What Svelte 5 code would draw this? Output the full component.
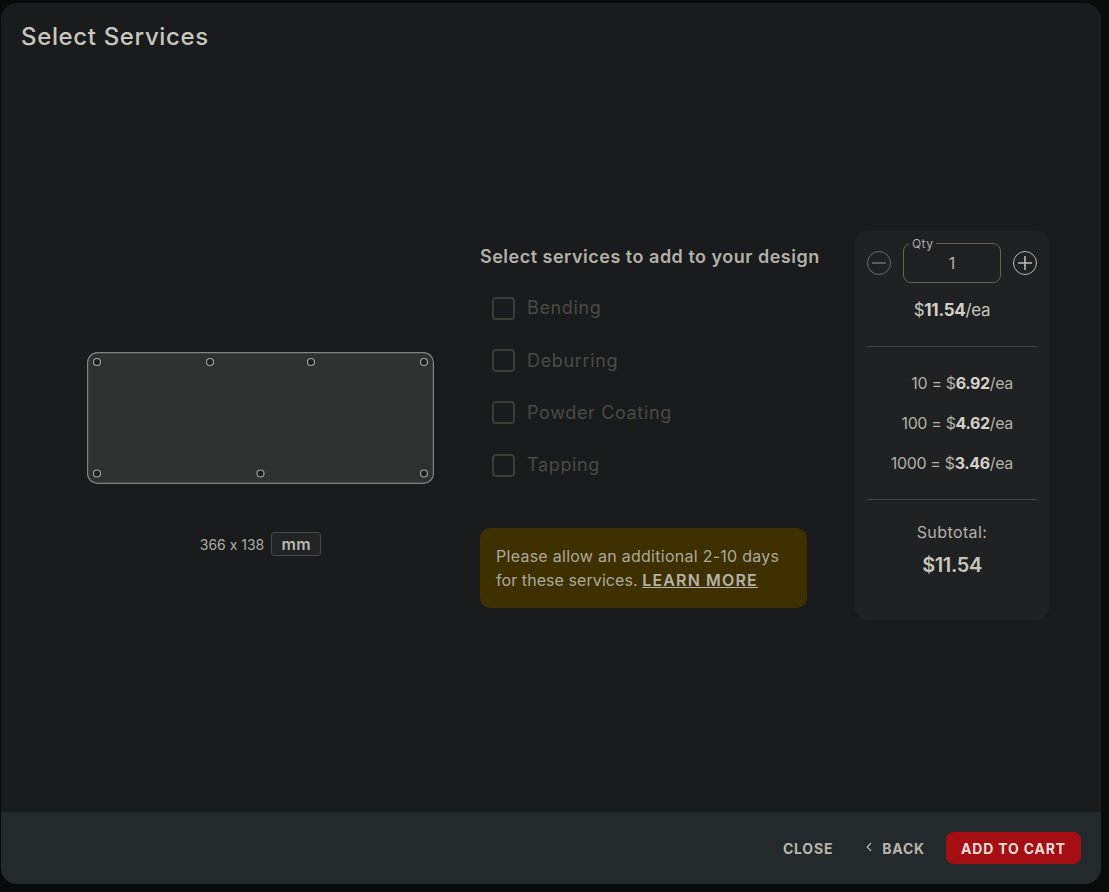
<script>
  const holes = [
    [10, 10], [123, 10], [224, 10], [337, 10],
    [10, 121.5], [173.5, 121.5], [337, 121.5]
  ];
  const services = ['Bending', 'Deburring', 'Powder Coating', 'Tapping'];
  const tiers = [
    { qty: 10, price: '6.92' },
    { qty: 100, price: '4.62' },
    { qty: 1000, price: '3.46' }
  ];
</script>

<div class="modal">
  <h1 class="title">Select Services</h1>

  <div class="content">
    <div class="preview">
      <svg class="plate" width="347" height="132" viewBox="0 0 347 132">
        <rect x="0.6" y="0.6" width="345.8" height="130.8" rx="10" fill="#303231" stroke="#838481" stroke-width="1.2" />
        {#each holes as [cx, cy]}
          <circle {cx} {cy} r="3.5" fill="#1d1f1f" stroke="#a8a8a5" stroke-width="1.1" />
        {/each}
      </svg>
      <div class="dims">
        <span>366 x 138</span>
        <span class="unit">mm</span>
      </div>
    </div>

    <div class="services">
      <h2 class="heading">Select services to add to your design</h2>
      <div class="options">
        {#each services as name}
          <label class="option">
            <input type="checkbox" disabled />
            <span>{name}</span>
          </label>
        {/each}
      </div>
      <div class="notice">
        <div class="line">Please allow an additional 2-10 days</div>
        <div class="line tight">for these services. <a href="#learn">LEARN MORE</a></div>
      </div>
    </div>

    <div class="pricing">
      <div class="qty-row">
        <button class="round minus" aria-label="Decrease">
          <svg width="24" height="24" viewBox="0 0 24 24"><circle cx="12" cy="12" r="11.5" fill="none" stroke="currentColor" /><path d="M5 12h14" stroke="currentColor" stroke-width="1.6" /></svg>
        </button>
        <div class="qty">
          <span class="qty-label">Qty</span>
          <span class="qty-value">1</span>
        </div>
        <button class="round plus" aria-label="Increase">
          <svg width="24" height="24" viewBox="0 0 24 24"><circle cx="12" cy="12" r="11.5" fill="none" stroke="currentColor" /><path d="M5 12h14M12 5v14" stroke="currentColor" stroke-width="1.6" /></svg>
        </button>
      </div>
      <div class="unit-price">$<b>11.54</b>/ea</div>
      <hr />
      <div class="tiers">
        {#each tiers as t}
          <div class="tier">{t.qty} = $<b>{t.price}</b>/ea</div>
        {/each}
      </div>
      <hr />
      <div class="subtotal">
        <div class="sub-label">Subtotal:</div>
        <div class="sub-value">$11.54</div>
      </div>
    </div>
  </div>

  <div class="footer">
    <button class="text-btn close">CLOSE</button>
    <button class="text-btn back">
      <svg width="6" height="10" viewBox="0 0 6 10"><path d="M5 1 1.2 5 5 9" fill="none" stroke="#b9b6ae" stroke-width="1.2" /></svg>
      BACK
    </button>
    <button class="cart">ADD TO CART</button>
  </div>
</div>

<style>
  :global(body) {
    margin: 0;
    background: #0a0c0c;
    font-family: Inter, "Open Sans", sans-serif;
    font-feature-settings: "calt" 0;
  }

  .modal {
    box-sizing: border-box;
    width: 1100px;
    height: 881px;
    margin: 3px 0 0 1px;
    background: #191b1d;
    border-radius: 16px;
    overflow: hidden;
    display: flex;
    flex-direction: column;
    color: #c8c5bd;
  }

  .title {
    margin: 0;
    padding: 19px 20px 0;
    height: 48px;
    font-size: 24px;
    line-height: 30px;
    font-weight: 500;
    letter-spacing: 0.65px;
    color: #c9c6bf;
  }

  .content {
    flex: 1;
    display: flex;
    align-items: flex-start;
    padding: 161px 0 0 86px;
  }

  .preview {
    width: 347px;
    margin: 121px 46px 0 0;
    display: flex;
    flex-direction: column;
    align-items: center;
  }

  .plate {
    display: block;
  }

  .dims {
    margin-top: 48px;
    display: flex;
    align-items: center;
    gap: 7px;
    font-size: 14px;
    color: #aeaba3;
  }

  .unit {
    box-sizing: border-box;
    height: 24px;
    width: 50px;
    display: flex;
    align-items: center;
    justify-content: center;
    border: 1px solid #47494a;
    border-radius: 3px;
    background: #212325;
    font-weight: 600;
    font-size: 16px;
    letter-spacing: 0.3px;
    color: #b9b6ae;
  }

  .services {
    width: 340px;
    margin: 15px 35px 0 0;
  }

  .heading {
    margin: 0;
    font-size: 18px;
    line-height: 22px;
    font-weight: 600;
    letter-spacing: 0.5px;
    color: #b3b0a8;
    white-space: nowrap;
  }

  .options {
    margin-top: 14px;
    padding-left: 12px;
    display: flex;
    flex-direction: column;
  }

  .option {
    height: 52.4px;
    display: flex;
    align-items: center;
    gap: 12px;
    font-size: 18px;
    letter-spacing: 0.65px;
    color: #4c4b46;
  }

  .option span {
    margin-top: -1px;
  }

  .option input {
    appearance: none;
    box-sizing: border-box;
    margin: 0;
    width: 23px;
    height: 23px;
    border: 2px solid #3d3c36;
    border-radius: 4px;
    background: transparent;
  }

  .notice {
    box-sizing: border-box;
    width: 327px;
    height: 80px;
    margin-top: 36px;
    padding: 16px;
    background: #3f3000;
    border-radius: 10px;
    font-size: 16px;
    line-height: 24px;
    letter-spacing: 0.27px;
    color: #aca99f;
  }

  .line {
    white-space: nowrap;
  }

  .tight {
    letter-spacing: 0.07px;
  }

  .notice a {
    color: #b5b2a8;
    font-weight: 600;
    letter-spacing: 1.15px;
  }

  .pricing {
    box-sizing: border-box;
    width: 194px;
    height: 389px;
    padding: 12px 12px;
    background: #1f2123;
    border-radius: 12px;
    text-align: center;
    font-size: 16px;
    color: #b3b0a8;
  }

  .qty-row {
    display: flex;
    align-items: center;
    justify-content: space-between;
  }

  .round {
    padding: 0;
    border: 0;
    background: none;
    display: flex;
  }

  .minus { color: #6f6d67; }
  .plus { color: #bdbab2; }

  .qty {
    position: relative;
    box-sizing: border-box;
    width: 98px;
    height: 40px;
    border: 1px solid #6a6355;
    border-radius: 8px;
    display: flex;
    align-items: center;
    justify-content: center;
  }

  .qty-label {
    position: absolute;
    top: -7px;
    left: 5px;
    padding: 0 3px;
    background: #1f2123;
    font-size: 12px;
    line-height: 13px;
    letter-spacing: 0.4px;
    color: #aeaba3;
  }

  .qty-value {
    font-size: 16px;
    color: #b3b0a8;
  }

  .unit-price {
    margin-top: 16px;
    font-size: 17px;
    line-height: 22px;
    letter-spacing: -0.3px;
    color: #c8c5bd;
  }

  b {
    font-weight: 700;
    color: #d4d1ca;
  }

  hr {
    margin: 25px 0 0;
    border: 0;
    border-top: 1px solid #454644;
  }

  .tiers {
    margin-top: 26px;
    display: flex;
    flex-direction: column;
    align-items: flex-end;
    gap: 20px;
    padding-right: 24px;
  }

  .tier {
    line-height: 20px;
    letter-spacing: -0.35px;
  }

  .tiers + hr {
    margin-top: 26px;
  }

  .subtotal {
    margin-top: 22px;
  }

  .sub-label {
    line-height: 20px;
    letter-spacing: 0.4px;
  }

  .sub-value {
    margin-top: 11px;
    font-size: 20px;
    line-height: 24px;
    font-weight: 600;
    letter-spacing: -0.4px;
    color: #c8c5bd;
  }

  .footer {
    height: 72px;
    flex: none;
    background: #24292c;
    display: flex;
    align-items: center;
    justify-content: flex-end;
    padding-right: 20px;
  }

  button {
    font-family: inherit;
    font-feature-settings: inherit;
  }

  .text-btn {
    padding: 0;
    border: 0;
    background: none;
    font-size: 14px;
    font-weight: 700;
    letter-spacing: 0.8px;
    color: #b9b6ae;
  }

  .close {
    margin-right: 33px;
  }

  .back {
    display: flex;
    align-items: center;
    gap: 10px;
    margin-right: 21px;
  }

  .back svg {
    margin-top: -2px;
  }

  .cart {
    width: 135px;
    height: 32px;
    padding: 0;
    border: 0;
    border-radius: 8px;
    background: #a50e13;
    font-size: 14px;
    font-weight: 700;
    letter-spacing: 0.8px;
    color: #e3dfd8;
  }
</style>
